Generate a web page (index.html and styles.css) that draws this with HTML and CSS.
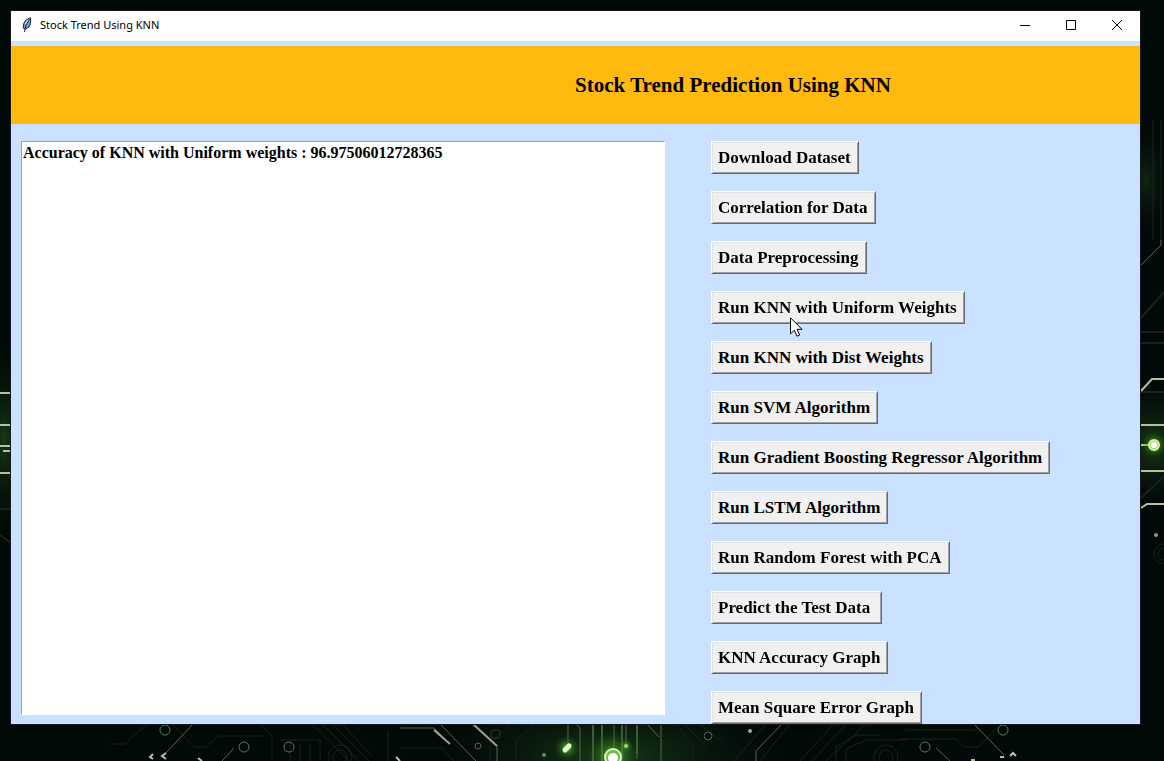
FILE: index.html
```html
<!DOCTYPE html>
<html lang="en">
<head>
<meta charset="utf-8">
<title>Stock Trend Using KNN</title>
<link rel="stylesheet" href="styles.css">
</head>
<body>
<svg class="wallpaper" viewBox="0 0 1164 761" preserveAspectRatio="none" aria-hidden="true">
  <defs>
    <radialGradient id="glow"><stop offset="0" stop-color="#8cf05a" stop-opacity=".9"/><stop offset=".35" stop-color="#4fa52c" stop-opacity=".5"/><stop offset="1" stop-color="#1c5a14" stop-opacity="0"/></radialGradient>
    <radialGradient id="haze"><stop offset="0" stop-color="#1d4a1c" stop-opacity=".75"/><stop offset="1" stop-color="#0a1f0d" stop-opacity="0"/></radialGradient>
  </defs>
  <rect width="1164" height="761" fill="#020a09"/>
  <ellipse cx="610" cy="755" rx="170" ry="60" fill="url(#haze)"/>
  <ellipse cx="1154" cy="444" rx="50" ry="60" fill="url(#haze)"/>
  <ellipse cx="1146" cy="180" rx="22" ry="50" fill="url(#haze)" opacity=".6"/>
  <ellipse cx="4" cy="440" rx="24" ry="90" fill="url(#haze)"/>
  <g fill="none" stroke="#16221b">
    <path d="M110 744h15l22-20M172 724l22 23h12l12-11h46M260 724l12 12v25M280 740h40v21M290 743v18M300 743v18M310 743v18M312 724l37 37M322 724l37 37M332 724l37 37M342 724l30 32M388 730v31M400 748h42l12 13M490 761v-18l20-19M516 761v-20l18-17M676 724l17 20v17M684 724l22 22M700 724l22 18M734 761l32-37M760 761l30-37M800 761l34-37M812 761l34-37M826 761l40-37M836 761v-14l20-12h24M846 761v-12l20-9h40M900 739h56l8 8h14l20-20M905 730h70M1153 240v-120M1161 240v-120"/>
    <circle cx="340" cy="757" r="12"/><circle cx="340" cy="757" r="7"/><circle cx="886" cy="757" r="12"/><circle cx="886" cy="757" r="7"/>
    <circle cx="1164" cy="554" r="10"/><circle cx="1164" cy="554" r="6"/>
    <path d="M1141 318l23-26M1141 332h23M1141 343h23M1141 392h23M1141 498l23-22M0 535l11 8M0 509h11" stroke-width="2"/>
  </g>
  <g fill="none" stroke="#59644f">
    <path d="M165 754l28-30M222 761l12-13M400 728h34l15 15M440 724l36 37M473 724l24 22v15M576 724l4 4v33M593 724v37M602 724v37M614 724v25M622 724v37M637 724v35M568 724v22M626 724v22M647 724l12 13M661 724v37M756 761v-10l26-27M936 748l14 13M974 724l30 31M1141 265l20-20v-5"/>
    <path d="M434 730l16 14M473 724l24 22" stroke="#9aa184" stroke-width="2"/>
    <path d="M593 724v37M602 724v37M622 724v37M637 724v30" stroke="#49783a"/>
  </g>
  <g fill="none" stroke="#4a7f5a">
    <circle cx="165" cy="730" r="5"/><circle cx="244" cy="747" r="5"/><circle cx="289" cy="747" r="5"/><circle cx="925" cy="747" r="5"/><circle cx="1003" cy="730" r="5"/>
    <circle cx="478" cy="746" r="3" stroke="#53604f"/><circle cx="708" cy="736" r="4" stroke="#53604f"/><rect x="491" y="730" width="9" height="8" rx="2" stroke="#2b3b2d"/>
  </g>
  <g fill="none" stroke="#b7c1aa" stroke-width="2">
    <path d="M153 754l-3 3 3 2M166 753l-4 3 4 3M198 758l4 3M396 757l4 4M971 760h4M1000 757h4M1010 756l3-3 3 3"/>
    <path d="M1141 391l11-12h12M1141 425h23M1141 471h23M1141 508l6-4h17M0 393h11M0 425h11M0 446h11M3 451h8M0 473h11" stroke="#b4c09f"/>
    <path d="M1141 445h10" stroke="#a4db74"/>
  </g>
  <circle cx="544" cy="755" r="2" fill="#77836d"/><circle cx="750" cy="731" r="2" fill="#a0aca0"/><circle cx="1156" cy="535" r="2" fill="#8a9a76"/>
  <circle cx="567" cy="748" r="13" fill="url(#glow)"/><path d="M565 750l4-4" stroke="#eaffcf" stroke-width="5" stroke-linecap="round"/>
  <circle cx="626" cy="746" r="7" fill="url(#glow)"/><circle cx="626" cy="746" r="2" fill="#b3f984"/>
  <circle cx="613" cy="757" r="26" fill="url(#glow)"/><circle cx="613" cy="757" r="8" fill="#75b956" stroke="#d7f7b2" stroke-width="2"/><circle cx="613" cy="758" r="5" fill="#fff"/>
  <circle cx="1154" cy="445" r="13" fill="url(#glow)"/><circle cx="1154" cy="445" r="5" fill="#a9c795" stroke="#d6f783" stroke-width="2"/><circle cx="1154" cy="445" r="3" fill="#fff"/>
</svg>

<main class="window">
  <header class="titlebar">
    <svg class="feather" width="12" height="16" viewBox="0 0 12 16" aria-hidden="true">
      <path d="M9 .8L4.500 3.500 2.500 7l-.3 4 2 1L8 10l1.500-3.500L9.700 1z" fill="#6f9fd4" stroke="#1c2633"/>
      <path d="M8.500 2.500L5 8l-1.500 7" fill="none" stroke="#14202e"/>
      <path d="M7 3L4.500 7" stroke="#d6e8fa"/>
    </svg>
    <span class="caption">Stock Trend Using KNN</span>
    <div class="controls">
      <button class="control" type="button" aria-label="Minimize"><svg width="10" height="10" viewBox="0 0 10 10"><path d="M0 5.500h10"/></svg></button>
      <button class="control" type="button" aria-label="Maximize"><svg width="10" height="10" viewBox="0 0 10 10"><path d="M.5.5h9v9h-9z"/></svg></button>
      <button class="control" type="button" aria-label="Close"><svg width="10" height="10" viewBox="0 0 10 10"><path d="M0 0l10 10M10 0L0 10"/></svg></button>
    </div>
  </header>
  <h1 class="banner">Stock Trend Prediction Using KNN</h1>
  <div class="workspace">
    <textarea class="output" aria-label="Output" spellcheck="false">Accuracy of KNN with Uniform weights : 96.97506012728365</textarea>
    <div class="actions">
      <button class="action" type="button">Download Dataset</button>
      <button class="action" type="button">Correlation for Data</button>
      <button class="action" type="button">Data Preprocessing</button>
      <button class="action" type="button">Run KNN with Uniform Weights<svg class="pointer" width="13" height="20" viewBox="0 0 13 20" aria-hidden="true"><path d="M.5.8v16l3.800-3.600 2.700 6 2.700-1.200-2.700-5.700h5z"/></svg></button>
      <button class="action" type="button">Run KNN with Dist Weights</button>
      <button class="action" type="button">Run SVM Algorithm</button>
      <button class="action" type="button">Run Gradient Boosting Regressor Algorithm</button>
      <button class="action" type="button">Run LSTM Algorithm</button>
      <button class="action" type="button">Run Random Forest with PCA</button>
      <button class="action" type="button">Predict the Test Data </button>
      <button class="action" type="button">KNN Accuracy Graph</button>
      <button class="action" type="button">Mean Square Error Graph</button>
    </div>
  </div>
</main>
</body>
</html>
```
FILE: styles.css
```css
* {
  box-sizing: border-box;
}

body {
  margin: 0;
  min-height: 100vh;
  display: flex;
  padding: 11px 24px 37px 11px;
  background: #020a09;
  font-family: "Liberation Serif", "Times New Roman", serif;
  color: #000;
}

.wallpaper {
  position: fixed;
  inset: 0;
  z-index: -1;
  width: 100%;
  height: 100%;
}

.window {
  flex: 1;
  min-width: 0;
  display: flex;
  flex-direction: column;
  background: #cae1ff;
  outline: 1px solid #151b1a;
}

.titlebar {
  display: flex;
  align-items: center;
  height: 30px;
  padding: 0 0 2px 10px;
  background: #fff;
}

.caption {
  flex: 1;
  padding-left: 7px;
  font: 11px/16px "Noto Sans", sans-serif;
}

.controls {
  display: flex;
}

.control {
  display: flex;
  align-items: center;
  justify-content: center;
  width: 46px;
  height: 28px;
  padding: 0;
  border: 0;
  background: transparent;
}

.control svg {
  fill: none;
  stroke: #000;
}

.banner {
  margin: 5px 0 17px;
  padding: 27px 0 27px 315px;
  background: #ffb90f;
  font-size: 21px;
  line-height: 24px;
  text-align: center;
}

.workspace {
  flex: 1;
  display: grid;
  grid-template-columns: 644fr 419fr;
  gap: 46px;
  padding: 0 10px;
}

.output {
  margin: 0 0 9px;
  padding: 2px 1px;
  border: 1px solid;
  border-color: #a0a0a0 #fff #fff #a0a0a0;
  outline: 0;
  background: #fff;
  resize: none;
  font: bold 16px/18px "Liberation Serif", "Times New Roman", serif;
  color: #000;
}

.actions {
  display: flex;
  flex-direction: column;
  align-items: flex-start;
  gap: 17px;
}

.action {
  position: relative;
  height: 33px;
  padding: 0 7px 0 6px;
  border: 1px solid;
  border-color: #fff #696969 #696969 #fff;
  box-shadow: inset 1px 1px #e3e3e3, inset -1px -1px #a0a0a0;
  background: #f0f0f0;
  font: bold 17px/20px "Liberation Serif", "Times New Roman", serif;
  color: #000;
  white-space: pre;
}

.pointer {
  position: absolute;
  left: 78px;
  top: 25px;
  fill: #fff;
  stroke: #000;
}
```
